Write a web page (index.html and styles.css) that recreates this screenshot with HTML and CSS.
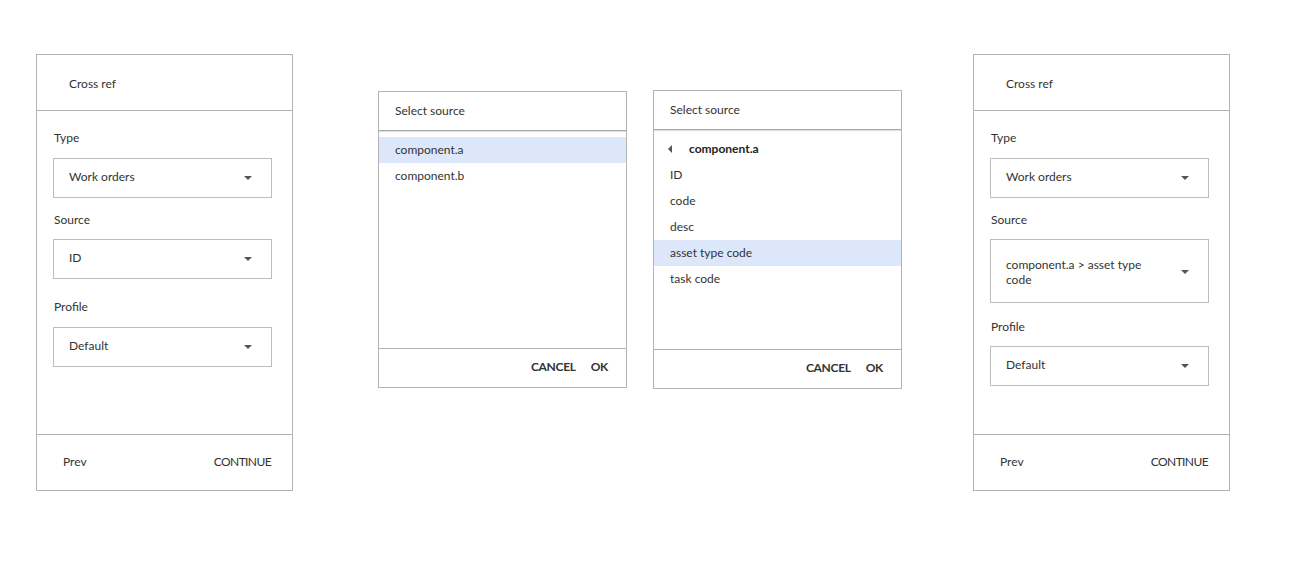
FILE: index.html
```html
<!DOCTYPE html>
<html lang="en">
<head>
<meta charset="utf-8">
<title>Cross ref</title>
<link rel="stylesheet" href="styles.css">
</head>
<body>
<div class="page">
  <section class="card form-card card-a">
    <header class="form-head">Cross ref</header>
    <div class="form-body">
      <div class="field field-type">
        <div class="label">Type</div>
        <div class="select"><span class="select-text">Work orders</span><span class="caret"></span></div>
      </div>
      <div class="field field-source">
        <div class="label">Source</div>
        <div class="select"><span class="select-text">ID</span><span class="caret"></span></div>
      </div>
      <div class="field field-profile">
        <div class="label">Profile</div>
        <div class="select"><span class="select-text">Default</span><span class="caret"></span></div>
      </div>
    </div>
    <footer class="form-foot"><span>Prev</span><span class="caps">CONTINUE</span></footer>
  </section>

  <section class="card dialog dialog-a">
    <header class="dialog-head">Select source</header>
    <ul class="dialog-list">
      <li class="row selected">component.a</li>
      <li class="row">component.b</li>
    </ul>
    <footer class="dialog-foot"><span class="btn">CANCEL</span><span class="btn">OK</span></footer>
  </section>

  <section class="card dialog dialog-b">
    <header class="dialog-head">Select source</header>
    <ul class="dialog-list">
      <li class="row back-row"><span class="back"></span><strong>component.a</strong></li>
      <li class="row">ID</li>
      <li class="row">code</li>
      <li class="row">desc</li>
      <li class="row selected">asset type code</li>
      <li class="row">task code</li>
    </ul>
    <footer class="dialog-foot"><span class="btn">CANCEL</span><span class="btn">OK</span></footer>
  </section>

  <section class="card form-card card-b">
    <header class="form-head">Cross ref</header>
    <div class="form-body">
      <div class="field field-type">
        <div class="label">Type</div>
        <div class="select"><span class="select-text">Work orders</span><span class="caret"></span></div>
      </div>
      <div class="field field-source">
        <div class="label">Source</div>
        <div class="select select-tall"><span class="select-text wrap">component.a &gt; asset type code</span><span class="caret"></span></div>
      </div>
      <div class="field field-profile field-profile-b">
        <div class="label">Profile</div>
        <div class="select"><span class="select-text">Default</span><span class="caret"></span></div>
      </div>
    </div>
    <footer class="form-foot"><span>Prev</span><span class="caps">CONTINUE</span></footer>
  </section>
</div>
</body>
</html>
```

FILE: styles.css
```css
* { box-sizing: border-box; }

html, body {
  margin: 0;
  padding: 0;
  background: #ffffff;
}

body {
  font-family: "Lato", "Liberation Sans", sans-serif;
  font-size: 12px;
  color: #333333;
  line-height: 16px;
}

.page {
  display: flex;
  align-items: flex-start;
  padding-left: 36px;
}

.card {
  border: 1px solid #b3b3b3;
  background: #ffffff;
  display: flex;
  flex-direction: column;
}

/* form cards */
.form-card {
  width: 257px;
  height: 437px;
  margin-top: 54px;
}

.card-b { margin-left: 71px; }

.form-head {
  height: 56px;
  border-bottom: 1px solid #b3b3b3;
  padding: 2px 0 0 32px;
  display: flex;
  align-items: center;
}

.form-body {
  flex: 1;
  padding: 19px 20px 0 16px;
}

.label {
  padding-left: 1px;
  height: 16px;
}

.field-type .select { margin-top: 12px; }
.field-source { margin-top: 14px; }
.field-source .select { margin-top: 11px; }
.field-profile { margin-top: 20px; }
.field-profile .select { margin-top: 12px; }
.field-profile-b { margin-top: 16px; }
.field-profile-b .select { margin-top: 11px; }

.select {
  height: 40px;
  border: 1px solid #bdbdbd;
  display: flex;
  align-items: center;
  justify-content: space-between;
  padding: 0 19px 2px 15px;
}

.select-tall {
  height: 64px;
  padding: 2px 19px 0 15px;
}

.select-text.wrap {
  width: 140px;
  line-height: 15px;
}

.caret {
  width: 0;
  height: 0;
  border-left: 4px solid transparent;
  border-right: 4px solid transparent;
  border-top: 4px solid #55555c;
  margin-top: 2px;
}

.select-tall .caret {
  margin-top: 0;
}

.form-foot {
  height: 56px;
  border-top: 1px solid #b3b3b3;
  display: flex;
  align-items: center;
  justify-content: space-between;
  padding: 0 21px 1px 26px;
}

.caps {
  letter-spacing: -0.6px;
}

/* dialogs */
.dialog {
  width: 249px;
}

.dialog-a {
  height: 297px;
  margin-top: 91px;
  margin-left: 85px;
}

.dialog-b {
  height: 299px;
  margin-top: 90px;
  margin-left: 26px;
}

.dialog-head {
  height: 39px;
  padding-left: 16px;
  display: flex;
  align-items: center;
  border-bottom: 1px solid #a8a8a8;
  box-shadow: 0 1px 1px rgba(0, 0, 0, 0.12);
  position: relative;
  z-index: 1;
}

.dialog-list {
  flex: 1;
  list-style: none;
  margin: 0;
  padding: 6px 0 0 0;
}

.row {
  height: 26px;
  display: flex;
  align-items: center;
  padding-left: 16px;
}

.row.selected {
  background: #dce7fb;
}

.back-row strong {
  font-weight: 700;
  color: #222;
}

.back {
  width: 0;
  height: 0;
  border-top: 4px solid transparent;
  border-bottom: 4px solid transparent;
  border-right: 4px solid #55555c;
  margin: 0 17px 0 -2px;
}

.dialog-foot {
  height: 39px;
  border-top: 1px solid #b3b3b3;
  display: flex;
  align-items: center;
  justify-content: flex-end;
  gap: 15px;
  padding: 0 18px 2px 0;
}

.btn {
  font-weight: 700;
  color: #333;
  letter-spacing: -0.3px;
}
```
